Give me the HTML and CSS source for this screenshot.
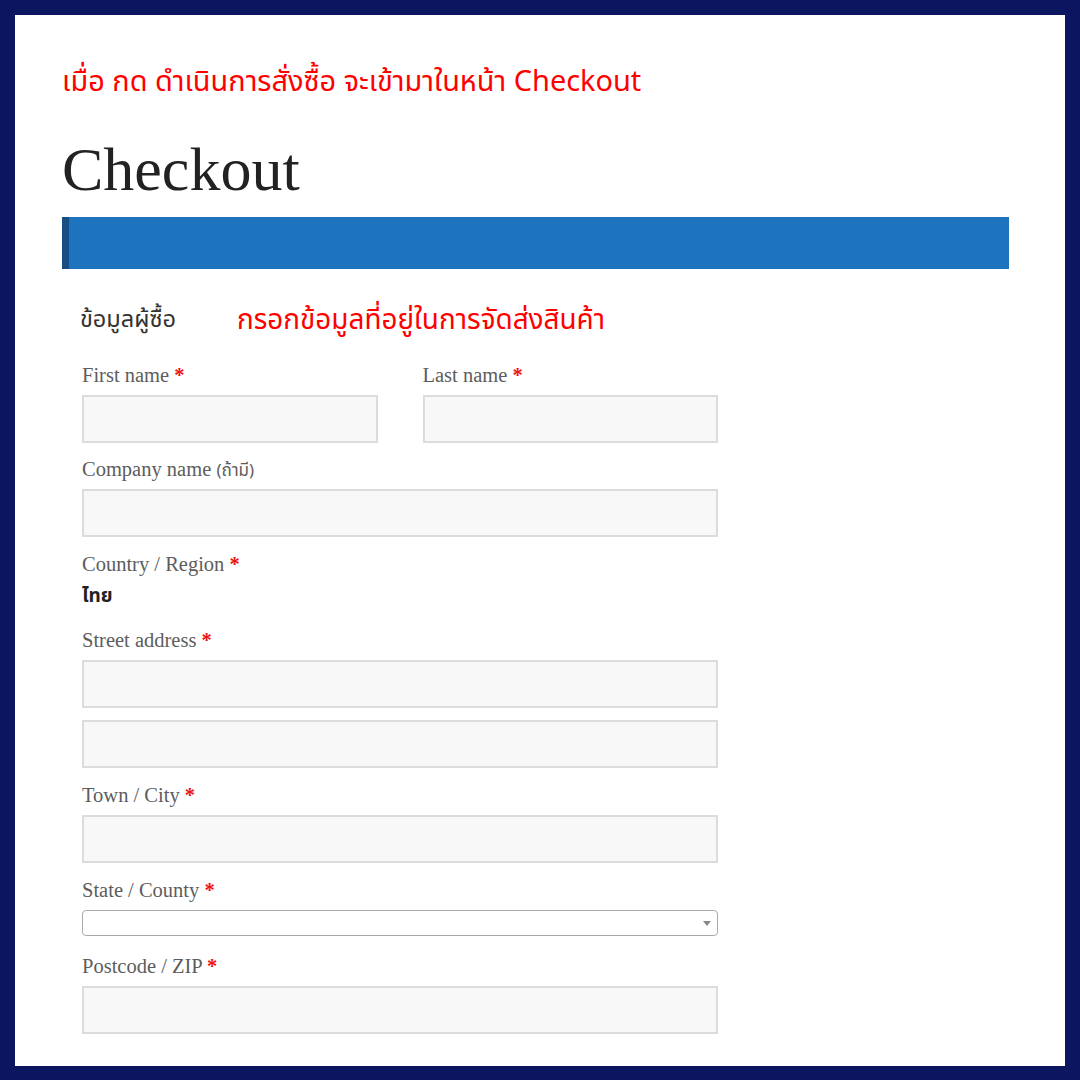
FILE: index.html
```html
<!DOCTYPE html>
<html lang="th">
<head>
    <meta charset="UTF-8">
    <meta name="viewport" content="width=device-width, initial-scale=1.0">
    <title>Checkout</title>
    <link rel="stylesheet" href="styles.css">
</head>
<body>
    <div class="page">
        <p class="note">เมื่อ กด ดำเนินการสั่งซื้อ จะเข้ามาในหน้า Checkout</p>
        <h1 class="title">Checkout</h1>
        <div class="notice-bar"></div>

        <div class="billing">
            <div class="billing-head">
                <h3>ข้อมูลผู้ซื้อ</h3>
                <span class="hint">กรอกข้อมูลที่อยู่ในการจัดส่งสินค้า</span>
            </div>

            <div class="fields">
                <div class="row two">
                    <div class="field">
                        <label>First name <abbr>*</abbr></label>
                        <input type="text">
                    </div>
                    <div class="field">
                        <label>Last name <abbr>*</abbr></label>
                        <input type="text">
                    </div>
                </div>

                <div class="field">
                    <label>Company name <span class="opt">(ถ้ามี)</span></label>
                    <input type="text">
                </div>

                <div class="field country">
                    <label>Country / Region <abbr>*</abbr></label>
                    <strong>ไทย</strong>
                </div>

                <div class="field">
                    <label>Street address <abbr>*</abbr></label>
                    <input type="text">
                    <input type="text" class="second">
                </div>

                <div class="field">
                    <label>Town / City <abbr>*</abbr></label>
                    <input type="text">
                </div>

                <div class="field">
                    <label>State / County <abbr>*</abbr></label>
                    <div class="select"><span class="arrow"></span></div>
                </div>

                <div class="field">
                    <label>Postcode / ZIP <abbr>*</abbr></label>
                    <input type="text">
                </div>
            </div>
        </div>
    </div>
</body>
</html>
```

FILE: styles.css
```css
* { box-sizing: border-box; }
body {
    margin: 0;
    background-color: #0b1560;
    padding: 15px 15px 14px;
    height: 1080px;
    overflow: hidden;
}
.page {
    background-color: #ffffff;
    height: 1051px;
    padding: 47px 56px 0 47px;
    font-family: 'Liberation Serif', serif;
}
.note {
    margin: 0;
    font-family: 'Noto Sans Thai', 'Noto Sans', 'DejaVu Sans', sans-serif;
    font-size: 28.9px;
    line-height: 40px;
    color: #ff0000;
}
.title {
    margin: 31px 0 12px;
    font-family: 'Liberation Serif', serif;
    font-weight: normal;
    font-size: 62px;
    line-height: 72px;
    color: #222222;
}
.notice-bar {
    height: 52px;
    background-color: #1e73be;
    border-left: 7px solid #174f85;
}
.billing {
    padding: 33px 0 0 20px;
    width: 656px;
}
.billing-head {
    display: flex;
    align-items: center;
    height: 36px;
    margin-left: -2px;
}
.billing-head h3 {
    margin: 0;
    width: 157px;
    font-family: 'Noto Sans Thai', 'Noto Sans', 'DejaVu Serif', serif;
    font-weight: normal;
    font-size: 23.5px;
    color: #333333;
}
.billing-head .hint {
    font-family: 'Noto Sans Thai', 'Noto Sans', 'DejaVu Sans', sans-serif;
    font-size: 27.9px;
    color: #ff0000;
}
.fields {
    margin-top: 24px;
    display: flex;
    flex-direction: column;
    gap: 14px;
}
.row.two {
    display: grid;
    grid-template-columns: 1fr 1fr;
    gap: 45px;
    margin-bottom: -1px;
}
.field label {
    display: block;
    height: 26px;
    font-size: 20.5px;
    line-height: 26px;
    color: #5d5d5d;
    margin-bottom: 7px;
}
.field label abbr {
    color: #ee1111;
    font-weight: bold;
    text-decoration: none;
}
.field label .opt {
    font-family: 'Noto Sans Thai', 'DejaVu Sans', sans-serif;
    font-size: 17px;
    line-height: 20px;
}
.field input {
    display: block;
    width: 100%;
    height: 48px;
    margin: 0;
    background-color: #f8f8f8;
    border: 2px solid #dcdcdc;
    border-radius: 0;
    outline: none;
}
.field input.second {
    margin-top: 12px;
}
.country label {
    margin-bottom: 4px;
}
.country strong {
    display: block;
    font-family: 'Noto Sans Thai', 'DejaVu Serif', serif;
    font-size: 19px;
    line-height: 32px;
    color: #222222;
}
.select {
    position: relative;
    height: 26px;
    margin-bottom: 3px;
    border: 1px solid #aaaaaa;
    border-radius: 4px;
    background-color: #ffffff;
}
.select .arrow {
    position: absolute;
    right: 6px;
    top: 10px;
    border-left: 4px solid transparent;
    border-right: 4px solid transparent;
    border-top: 5px solid #888888;
}
```
